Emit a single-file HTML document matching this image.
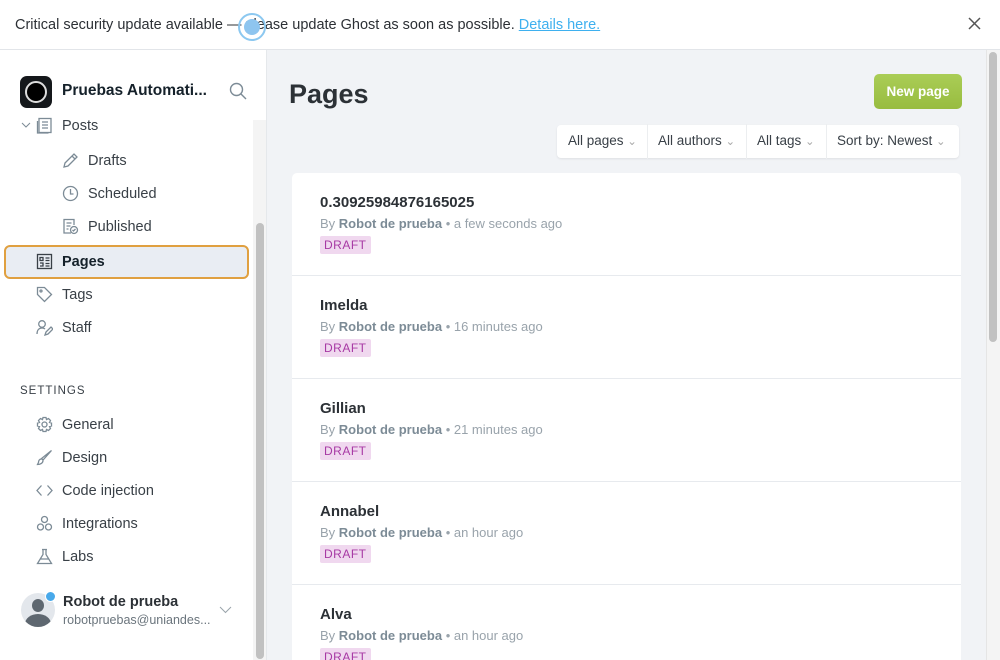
<!DOCTYPE html>
<html style="overflow:hidden;height:660px"><head><meta charset="utf-8"><style>
*{box-sizing:border-box;margin:0;padding:0}
body{width:1000px;height:660px;overflow:hidden;font-family:"Liberation Sans",sans-serif;background:#f1f3f6;position:relative;color:#15212a}
.banner{position:absolute;left:0;top:0;width:1000px;height:50px;background:#fff;border-bottom:1px solid #e2e5e9;font-size:14.5px;color:#2c3035}
.banner .t{position:absolute;left:15px;top:17px}
.banner a{color:#3eb0ef;text-decoration:underline}
.side{position:absolute;left:0;top:50px;width:267px;height:610px;background:#fff;border-right:1px solid #e5e8eb;overflow:hidden}
.ni{position:absolute;font-size:14.5px;color:#394047;display:flex;align-items:center}
.ni svg{width:17px;height:17px;margin-right:9px;fill:none;stroke:#7c8b96;stroke-width:1.3}
.main{position:absolute;left:267px;top:50px;width:733px;height:610px;overflow:hidden}
.row{position:absolute;left:25px;width:669px;height:103px;background:#fff;border-bottom:1px solid #e7eaee}
.row h3{position:absolute;left:28px;top:21px;font-size:15px;color:#2c3136;font-weight:bold}
.row .m{position:absolute;left:28px;top:43px;font-size:13px;color:#99a3ab}
.row .m b{color:#7c8b96;font-weight:bold}
.row .d{position:absolute;left:28px;top:63px;background:#f0d8ef;color:#a739a4;font-size:12px;padding:2px 4px;border-radius:2px;letter-spacing:.5px}
</style></head><body>
<div class="banner"><div class="t">Critical security update available — please update Ghost as soon as possible. <a>Details here.</a></div>
<div style="position:absolute;left:238px;top:13px;width:28px;height:28px;border-radius:50%;border:2px solid #8cc8f0"></div>
<div style="position:absolute;left:244px;top:19px;width:16px;height:16px;border-radius:50%;background:#8ec5ef"></div>
<svg style="position:absolute;left:968px;top:17px" width="13" height="13" stroke="#555" stroke-width="1.5"><path d="M1 1l11 11M12 1L1 12"/></svg>
</div>
<div class="side">
<div style="position:absolute;left:20px;top:26px;width:32px;height:32px;border-radius:7px;background:#15181b"></div>
<div style="position:absolute;left:25px;top:31px;width:22px;height:22px;border-radius:50%;border:2px solid #ddd;background:#000"></div>
<div style="position:absolute;left:62px;top:32px;font-size:15.5px;font-weight:bold;color:#15212a">Pruebas Automati...</div>
<svg style="position:absolute;left:229px;top:32px" width="18" height="18" fill="none" stroke="#7c8b96" stroke-width="1.4"><circle cx="7.5" cy="7.5" r="6"/><path d="M12 12l5 5"/></svg>
<div style="position:absolute;left:253px;top:70px;width:13px;height:540px;background:#f4f4f4"></div>
<div style="position:absolute;left:256px;top:173px;width:8px;height:436px;background:#c1c1c1;border-radius:4px"></div>
<svg style="position:absolute;left:21px;top:71px" width="10" height="8" fill="none" stroke="#7c8b96"><path d="M1 2l4 4 4-4"/></svg>
<div class="ni" style="left:36px;top:67px"><svg viewBox="0 0 17 17"><rect x="3" y="1.5" width="12" height="14"/><path d="M1.5 4v12h11M6 5h6M6 8h6M6 11h6"/></svg>Posts</div>
<div class="ni" style="left:62px;top:102px"><svg viewBox="0 0 17 17"><path d="M2 15l1-4L12 2l3 3-9 9zM10 4l3 3"/></svg>Drafts</div>
<div class="ni" style="left:62px;top:135px"><svg viewBox="0 0 17 17"><circle cx="8.5" cy="8.5" r="7"/><path d="M8.5 4v5h3"/></svg>Scheduled</div>
<div class="ni" style="left:62px;top:168px"><svg viewBox="0 0 17 17"><path d="M9 15H2V1.5h10V7M4.5 5h5M4.5 8h4M4.5 11h2"/><circle cx="12" cy="12" r="3.5"/><path d="M10.5 12l1 1 2-2"/></svg>Published</div>
<div style="position:absolute;left:4px;top:195px;width:245px;height:34px;border:2px solid #e0a040;border-radius:6px;background:#e9edf3"></div>
<div class="ni" style="left:36px;top:203px;font-weight:bold;color:#15212a"><svg viewBox="0 0 17 17" style="stroke:#394047"><rect x="1.5" y="1.5" width="14" height="14"/><path d="M4 4.5h3v3H4zM4 10h3v3H4M9.5 5h4M9.5 7.5h4M9.5 10.5h4M9.5 13h4"/></svg>Pages</div>
<div class="ni" style="left:36px;top:236px"><svg viewBox="0 0 17 17"><path d="M1.5 1.5h7l7 7-7 7-7-7z"/><circle cx="5" cy="5" r="1"/></svg>Tags</div>
<div class="ni" style="left:36px;top:269px"><svg viewBox="0 0 17 17"><circle cx="6" cy="5" r="3.3"/><path d="M1 15c0-4 2-6 5-6 1.5 0 2.5.5 3 1M9 16l1-3 5-5 2 2-5 5z"/></svg>Staff</div>
<div style="position:absolute;left:20px;top:335px;font-size:11.5px;letter-spacing:1px;color:#394047">SETTINGS</div>
<div class="ni" style="left:36px;top:366px"><svg viewBox="0 0 17 17"><circle cx="8.5" cy="8.5" r="2.5"/><path d="M7 1.5h3l.5 2 2-1 2 2-1 2 2 .5v3l-2 .5 1 2-2 2-2-1-.5 2H7l-.5-2-2 1-2-2 1-2-2-.5V7l2-.5-1-2 2-2 2 1z"/></svg>General</div>
<div class="ni" style="left:36px;top:399px"><svg viewBox="0 0 17 17"><path d="M15.5 1.5L7 11l-1.5-1.5zM5.5 10c-2 0-3 1.5-3 3.5L1.5 15.5c3 0 5.5-1.5 5.5-4"/></svg>Design</div>
<div class="ni" style="left:36px;top:432px"><svg viewBox="0 0 17 17"><path d="M5.5 3.5L1 8.5l4.5 5M11.5 3.5l4.5 5-4.5 5"/></svg>Code injection</div>
<div class="ni" style="left:36px;top:465px"><svg viewBox="0 0 17 17"><circle cx="8.5" cy="4.5" r="3"/><circle cx="4.5" cy="12" r="3"/><circle cx="12.5" cy="12" r="3"/></svg>Integrations</div>
<div class="ni" style="left:36px;top:498px"><svg viewBox="0 0 17 17"><path d="M6 1.5h5M7 1.5v5L1.5 15.5h14L10 6.5v-5M4 11h9"/></svg>Labs</div>
<div style="position:absolute;left:21px;top:543px;width:34px;height:34px;border-radius:50%;background:#e3e7ec;overflow:hidden"><div style="position:absolute;left:11px;top:6px;width:12px;height:13px;border-radius:50%;background:#5e6770"></div><div style="position:absolute;left:4px;top:21px;width:26px;height:20px;border-radius:50%;background:#5e6770"></div></div>
<div style="position:absolute;left:45px;top:541px;width:11px;height:11px;border-radius:50%;background:#48a9ea;border:1.5px solid #fff"></div>
<div style="position:absolute;left:63px;top:544px;font-size:14.5px;font-weight:bold;color:#2c3136">Robot de prueba</div>
<div style="position:absolute;left:63px;top:563px;font-size:12.5px;color:#6b757d">robotpruebas@uniandes...</div>
<svg style="position:absolute;left:219px;top:556px" width="13" height="8" fill="none" stroke="#9aa4ab"><path d="M1 1l5.5 5.5L12 1"/></svg>
</div>
<div class="main">
<div style="position:absolute;left:22px;top:29px;font-size:27px;font-weight:bold;color:#2c3136">Pages</div>
<div style="position:absolute;left:607px;top:24px;width:88px;height:35px;border-radius:5px;background:linear-gradient(#aacd56,#98bc40);color:#fff;font-weight:bold;font-size:13.5px;text-align:center;line-height:35px">New page</div>
<div style="position:absolute;left:290px;top:75px;width:402px;height:33px;background:#fff;border-radius:4px;box-shadow:0 1px 2px rgba(0,0,0,.08);font-size:13.5px;color:#394047;display:flex;align-items:center">
<span style="width:91px;padding-left:11px;border-right:1px solid #eceef0;line-height:33px">All pages <small style="color:#aaa">⌄</small></span>
<span style="width:99px;padding-left:10px;border-right:1px solid #eceef0;line-height:33px">All authors <small style="color:#aaa">⌄</small></span>
<span style="width:80px;padding-left:10px;border-right:1px solid #eceef0;line-height:33px">All tags <small style="color:#aaa">⌄</small></span>
<span style="padding-left:10px;line-height:33px">Sort by: Newest <small style="color:#aaa">⌄</small></span></div>
<div class="row" style="top:123px;border-radius:5px 5px 0 0"><h3>0.30925984876165025</h3><div class="m">By <b>Robot de prueba</b> • a few seconds ago</div><span class="d">DRAFT</span></div>
<div class="row" style="top:226px"><h3>Imelda</h3><div class="m">By <b>Robot de prueba</b> • 16 minutes ago</div><span class="d">DRAFT</span></div>
<div class="row" style="top:329px"><h3>Gillian</h3><div class="m">By <b>Robot de prueba</b> • 21 minutes ago</div><span class="d">DRAFT</span></div>
<div class="row" style="top:432px"><h3>Annabel</h3><div class="m">By <b>Robot de prueba</b> • an hour ago</div><span class="d">DRAFT</span></div>
<div class="row" style="top:535px"><h3>Alva</h3><div class="m">By <b>Robot de prueba</b> • an hour ago</div><span class="d">DRAFT</span></div>
<div style="position:absolute;left:719px;top:0;width:14px;height:610px;background:#f4f4f4;border-left:1px solid #e5e5e5"></div>
<div style="position:absolute;left:722px;top:2px;width:8px;height:290px;background:#c1c1c1;border-radius:4px"></div>
</div>
</body></html>
